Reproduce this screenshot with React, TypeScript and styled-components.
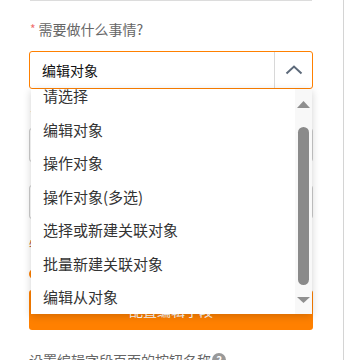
import React, { useLayoutEffect, useRef } from "react";
import styled, { createGlobalStyle } from "styled-components";

const Global = createGlobalStyle`
  html, body { margin: 0; padding: 0; background: #fff; }
  body { font-family: "Noto Sans CJK SC", "Noto Sans", sans-serif; overflow: hidden; height: 360px; }
`;

const Page = styled.div`
  width: 284px;
  min-height: 380px;
  padding: 0 30px 0 29px;
  border-right: 1px solid #d4d4d4;
  box-sizing: content-box;
  display: flex;
  flex-direction: column;
  & > * { flex-shrink: 0; }
`;

const TopRule = styled.div`
  height: 1px;
  margin-left: 1px;
  margin-right: 1px;
  background: #dcdcdc;
`;

const Label = styled.div<{ $top: number }>`
  margin-top: ${(p) => p.$top}px;
  height: 20px;
  line-height: 20px;
  font-size: 14px;
  color: #666;
  display: flex;
  align-items: center;
  white-space: nowrap;
`;

const Star = styled.span`
  color: #f07070;
  font-size: 12px;
  margin: 0 3px 0 1px;
  line-height: 1;
`;

const SelectWrap = styled.div`
  position: relative;
  margin-top: 12px;
  height: 38px;
`;

const SelectBox = styled.div`
  height: 38px;
  box-sizing: border-box;
  border: 1px solid #ff8000;
  border-radius: 3px;
  display: flex;
  align-items: stretch;
`;

const SelectValue = styled.div`
  flex: 1;
  padding-left: 12px;
  display: flex;
  align-items: center;
  font-size: 14px;
  color: #111;
`;

const ArrowCell = styled.div`
  width: 37px;
  border-left: 1px solid #d8d8d8;
  display: flex;
  align-items: center;
  justify-content: center;
`;

const Dropdown = styled.div`
  position: absolute;
  top: 38px;
  left: 2px;
  right: 1px;
  height: 225px;
  background: #fff;
  box-shadow: 0 2px 8px rgba(0, 0, 0, 0.18);
  display: flex;
  z-index: 5;
`;

const List = styled.div`
  flex: 1;
  overflow: hidden;
`;

const Item = styled.div`
  height: 33.5px;
  display: flex;
  align-items: center;
  padding-left: 12px;
  font-size: 15px;
  color: #333;
  white-space: nowrap;
`;

const Track = styled.div`
  width: 17px;
  background: #f8f8f8;
  display: flex;
  flex-direction: column;
  align-items: center;
  padding: 12px 0 11px;
  box-sizing: border-box;
`;

const Thumb = styled.div`
  width: 11px;
  flex: 1;
  margin: 19px 0 12px;
  border-radius: 6px;
  background: #8a8a8a;
`;

const InputBox = styled.div<{ $h: number; $top: number }>`
  margin-top: ${(p) => p.$top}px;
  height: ${(p) => p.$h}px;
  box-sizing: border-box;
  border: 1px solid #ccc;
  border-radius: 3px;
`;

const ErrorText = styled.div`
  margin-top: 16px;
  height: 14px;
  line-height: 14px;
  font-size: 12px;
  color: #b05020;
`;

const Radio = styled.div`
  margin-top: 20px;
  width: 10px;
  height: 10px;
  border-radius: 50%;
  background: #ff8000;
`;

const Button = styled.div`
  margin-top: 11px;
  height: 40px;
  border-radius: 3px;
  background: #ff8000;
  color: #fff;
  font-size: 14px;
  display: flex;
  align-items: center;
  justify-content: center;
`;

const Help = styled.span`
  display: inline-flex;
  align-items: center;
  justify-content: center;
  width: 14px;
  height: 14px;
  border-radius: 50%;
  background: #999;
  color: #fff;
  font-size: 11px;
  font-weight: bold;
  margin-left: 1px;
`;

const items = [
  "请选择",
  "编辑对象",
  "操作对象",
  "操作对象(多选)",
  "选择或新建关联对象",
  "批量新建关联对象",
  "编辑从对象",
];

export default function App() {
  const listRef = useRef<HTMLDivElement>(null);
  useLayoutEffect(() => {
    if (listRef.current) listRef.current.scrollTop = 10;
  }, []);
  return (
    <>
      <Global />
      <Page>
        <TopRule />
        <Label $top={18}>
          <Star>*</Star>需要做什么事情?
        </Label>
        <SelectWrap>
          <SelectBox>
            <SelectValue>编辑对象</SelectValue>
            <ArrowCell>
              <svg width="18" height="10" viewBox="0 0 18 10">
                <polyline points="1.5,8.5 9,1.5 16.5,8.5" fill="none" stroke="#5d6a7a" strokeWidth="2" />
              </svg>
            </ArrowCell>
          </SelectBox>
          <Dropdown>
            <List ref={listRef}>
              {items.map((t) => (
                <Item key={t}>{t}</Item>
              ))}
            </List>
            <Track>
              <svg width="13" height="7" viewBox="0 0 13 7">
                <polygon points="0,7 6.5,0 13,7" fill="#8f8f8f" />
              </svg>
              <Thumb />
              <svg width="13" height="6" viewBox="0 0 13 6">
                <polygon points="0,0 13,0 6.5,6" fill="#8f8f8f" />
              </svg>
            </Track>
          </Dropdown>
        </SelectWrap>
        <Label $top={16}>
          <Star>*</Star>编辑对象
        </Label>
        <InputBox $top={3} $h={34} />
        <InputBox $top={23} $h={34} />
        <ErrorText>必填</ErrorText>
        <Radio />
        <Button>配置编辑字段</Button>
        <Label $top={20}>
          设置编辑字段页面的按钮名称<Help>?</Help>
        </Label>
      </Page>
    </>
  );
}
